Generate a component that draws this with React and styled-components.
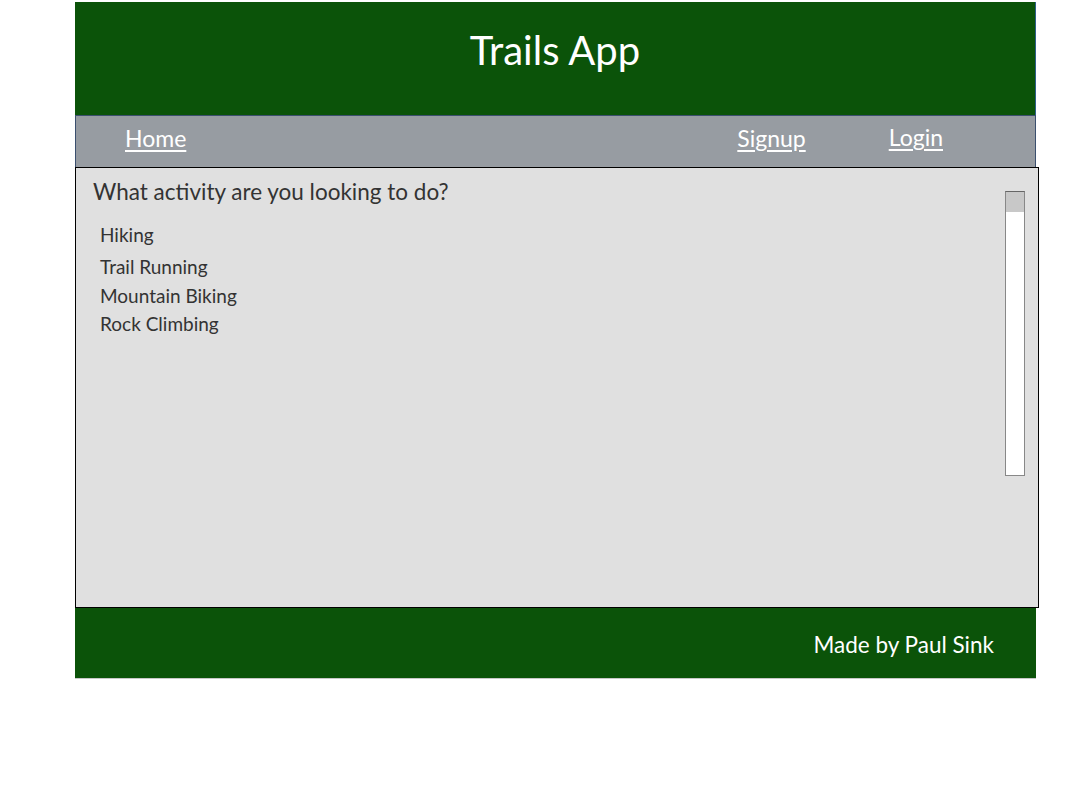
import React from "react";
import styled, { createGlobalStyle } from "styled-components";

const green = "#0b5309";
const font = `Lato, "Open Sans", sans-serif`;

const GlobalStyle = createGlobalStyle`
  body {
    margin: 0;
    background: #ffffff;
    font-family: ${font};
  }
`;

const Page = styled.div`
  width: 961px;
  margin: 2px 0 0 75px;
  display: flex;
  flex-direction: column;
`;

const Header = styled.header`
  height: 113px;
  background-color: ${green};
  border-right: 1px solid #2f5f8a;
  box-sizing: border-box;
  display: flex;
  justify-content: center;
  padding-top: 24px;
`;

const Title = styled.h1`
  margin: 0;
  color: #ffffff;
  font-size: 40px;
  font-weight: 400;
  line-height: 48px;
`;

const Nav = styled.nav`
  height: 52px;
  box-sizing: border-box;
  background-color: #979ca2;
  border: 1px solid #3b4f6e;
  border-bottom: none;
  display: flex;
  align-items: center;
  padding: 0 0 7px 49px;
`;

const NavLink = styled.a`
  color: #ffffff;
  font-size: 23px;
  text-decoration: underline;
  text-underline-offset: 3px;
  margin-left: ${(p) => p.$left || 0}px;
  margin-top: ${(p) => p.$dy || 0}px;
  cursor: pointer;
`;

const Content = styled.main`
  width: 964px;
  height: 441px;
  box-sizing: border-box;
  background-color: #e0e0e0;
  border: 1px solid #000000;
  display: flex;
  justify-content: space-between;
  padding: 9px 13px 0 17px;
`;

const Question = styled.div`
  display: flex;
  flex-direction: column;
`;

const Prompt = styled.h2`
  margin: 0;
  color: #333333;
  font-size: 22.5px;
  font-weight: 400;
  line-height: 30px;
`;

const ActivityList = styled.ul`
  list-style: none;
  margin: 14px 0 0 7px;
  padding: 0;
`;

const Activity = styled.li`
  color: #333333;
  font-size: 19px;
  line-height: 28px;
  margin-top: ${(p) => p.$gap || 0}px;
`;

const Scrollbar = styled.div`
  width: 20px;
  height: 285px;
  margin-top: 14px;
  box-sizing: border-box;
  background: #ffffff;
  border: 1px solid #888888;
  border-top-color: #666666;
`;

const Thumb = styled.div`
  height: 20px;
  background: #c8c8c8;
`;

const Footer = styled.footer`
  height: 70px;
  background-color: ${green};
  border-bottom: 1px solid #c8c8c8;
  display: flex;
  align-items: center;
  justify-content: flex-end;
  padding-right: 42px;
`;

const Credit = styled.p`
  margin: 0;
  color: #ffffff;
  font-size: 22.5px;
  padding-top: 2px;
`;

const activities = [
  { name: "Hiking", gap: 0 },
  { name: "Trail Running", gap: 4 },
  { name: "Mountain Biking", gap: 1 },
  { name: "Rock Climbing", gap: 0 },
];

const App = () => (
  <>
    <GlobalStyle />
    <Page>
      <Header>
        <Title>Trails App</Title>
      </Header>
      <Nav>
        <NavLink>Home</NavLink>
        <NavLink $left={551}>Signup</NavLink>
        <NavLink $left={83} $dy={-2}>
          Login
        </NavLink>
      </Nav>
      <Content>
        <Question>
          <Prompt>What activity are you looking to do?</Prompt>
          <ActivityList>
            {activities.map((a) => (
              <Activity key={a.name} $gap={a.gap}>
                {a.name}
              </Activity>
            ))}
          </ActivityList>
        </Question>
        <Scrollbar>
          <Thumb />
        </Scrollbar>
      </Content>
      <Footer>
        <Credit>Made by Paul Sink</Credit>
      </Footer>
    </Page>
  </>
);

export default App;
